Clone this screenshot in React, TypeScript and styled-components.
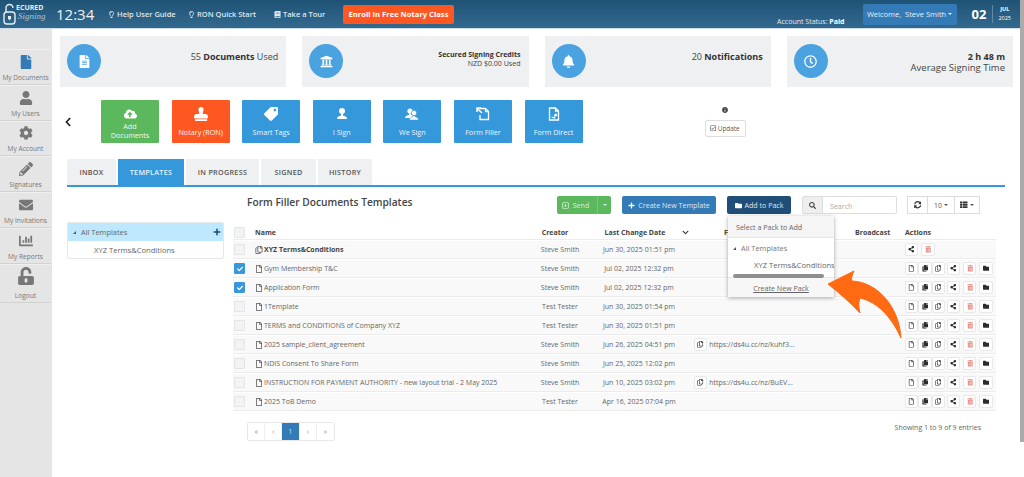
import React from 'react';
import styled, {createGlobalStyle} from 'styled-components';
import {
    FaBell, FaBook, FaChartBar, FaCheck, FaChevronDown, FaChevronLeft, FaCog, FaEnvelope,
    FaFile, FaFolder, FaInfoCircle, FaUnlockAlt, FaPencilAlt, FaPlus, FaRegCheckSquare, FaRegClock, FaRegCopy,
    FaRegFile, FaRegLightbulb, FaSearch, FaShareAlt, FaSyncAlt, FaTag, FaThList, FaTrashAlt,
    FaUniversity, FaUser, FaCloudUploadAlt, FaStamp, FaFileAlt, FaCopy, FaRegCaretSquareRight
} from 'react-icons/fa';

const GlobalStyle = createGlobalStyle`
  html, body {
    margin: 0;
    padding: 0;
    height: 477px;
    overflow: hidden;
    background: #fff;
    font-family: "Open Sans", "Liberation Sans", sans-serif;
    color: #555;
  }
  * { box-sizing: border-box; }
`

const Page = styled.div`
  position: relative;
  display: flex;
  width: 1024px;
  height: 477px;
  overflow: hidden;
`

const Viewport = styled.div`
  width: 1020px;
  flex: none;
`

const ScrollTrack = styled.div`
  width: 4px;
  height: 442px;
  background: #ababab;
  flex: none;
`

const Header = styled.header`
  height: 29px;
  display: flex;
  align-items: center;
  background: linear-gradient(#1e5375, #34698f);
  border-bottom: 1px solid #cfe0ec;
  color: #fff;
  padding-left: 3px;
`

const Logo = styled.div`
  width: 44px;
  height: 22px;
  flex: none;
  display: flex;
`

const LogoWords = styled.div`
  display: flex;
  flex-direction: column;
  padding-top: 1px;
`

const LogoTop = styled.div`
  font-size: 7px;
  line-height: 8px;
  font-weight: 700;
  color: #e6eef4;
`

const LogoScript = styled.div`
  font-family: "Liberation Serif", serif;
  font-style: italic;
  font-size: 9px;
  line-height: 9px;
  color: #a9c5d8;
  padding-left: 2px;
`

const Clock = styled.div`
  font-size: 15px;
  width: 52px;
  margin-left: 9px;
  color: #eef3f7;
`

const HeaderLink = styled.a<{ $width: number }>`
  display: flex;
  align-items: center;
  gap: 2px;
  width: ${({$width}) => $width}px;
  font-size: 7.5px;
  font-weight: 600;
  color: #dfe8ee;
  white-space: nowrap;
  svg { font-size: 7px; }
`

const Enroll = styled.div`
  background: #ff5722;
  border-radius: 2px;
  width: 111px;
  height: 19px;
  display: flex;
  align-items: center;
  justify-content: center;
  font-size: 7.6px;
  font-weight: 700;
`

const Status = styled.div`
  margin-left: auto;
  align-self: flex-end;
  font-size: 7px;
  padding-bottom: 2px;
  color: #e2eaf0;
  b { font-weight: 700; color: #fff; }
`

const Welcome = styled.div`
  margin-left: 18px;
  width: 94px;
  height: 21px;
  background: #337ab7;
  border-radius: 2px;
  font-size: 7.5px;
  display: flex;
  align-items: center;
  justify-content: center;
  color: #e8f0f6;
`

const DateBox = styled.div`
  display: flex;
  align-items: center;
  margin-left: 15px;
  margin-right: 9px;
`

const Day = styled.div`
  font-size: 13px;
  font-weight: 700;
  padding-right: 6px;
  border-right: 1px solid #5f8aa8;
  line-height: 18px;
`

const Month = styled.div`
  font-size: 5.5px;
  line-height: 9px;
  padding-left: 5px;
  text-align: center;
`

const Body = styled.div`
  display: flex;
  height: 448px;
`

const Sidebar = styled.nav`
  width: 52px;
  flex: none;
  background: #e5e5e5;
  padding-top: 20px;
`

const NavItem = styled.div`
  height: 35.8px;
  border-bottom: 1px solid #d2d2d2;
  border-top: 1px solid #f0f0f0;
  display: flex;
  flex-direction: column;
  align-items: center;
  justify-content: flex-end;
  padding-bottom: 2px;
  font-size: 6.6px;
  color: #777;
  white-space: nowrap;
  width: 51px;
  svg { font-size: 14px; color: #777; margin-bottom: 4px; }
  &:first-child svg { color: #337ab7; }
  &:last-child { height: 39px; }
  &:last-child svg { font-size: 18px; margin-bottom: 6px; }
`

const Main = styled.main`
  flex: 1;
  min-width: 0;
  padding: 7px 0 0 8px;
`

const StatsRow = styled.div`
  display: flex;
  gap: 16px;
  width: 953px;
`

const StatCard = styled.div`
  flex: 1;
  height: 51px;
  background: #eff0f2;
  display: flex;
  padding: 8px 8px 0 7px;
  justify-content: space-between;
`

const StatCircle = styled.div`
  width: 34px;
  height: 34px;
  border-radius: 50%;
  background: #4aa3e0;
  color: #fff;
  display: flex;
  align-items: center;
  justify-content: center;
  font-size: 13px;
  flex: none;
`

const StatText = styled.div<{ $small?: boolean }>`
  text-align: right;
  font-size: ${({$small}) => $small ? 7.05 : 9}px;
  line-height: ${({$small}) => $small ? 8.5 : 11}px;
  color: #444;
  padding-top: ${({$small}) => $small ? 6 : 7}px;
  b { font-weight: 700; color: #333; }
`

const StatSub = styled.span`
  font-size: 9.5px;
`

const ActionRow = styled.div`
  display: flex;
  align-items: flex-start;
  margin-top: 13px;
  height: 43px;
`

const Back = styled.div`
  width: 41px;
  padding: 16px 0 0 3px;
  font-size: 10px;
  color: #222;
`

const TileGroup = styled.div`
  display: flex;
  gap: 12.6px;
`

const Tile = styled.div<{ $color: string; $tight?: boolean }>`
  width: 58px;
  height: 43px;
  background: ${({$color}) => $color};
  color: #f0f6fb;
  font-size: 7.2px;
  line-height: 8.5px;
  text-align: center;
  white-space: pre-line;
  display: flex;
  flex-direction: column;
  align-items: center;
  padding-top: 7px;
  border-radius: 1px;
  svg {
    font-size: ${({$tight}) => $tight ? 13 : 14}px;
    height: 14px;
    margin-bottom: ${({$tight}) => $tight ? 1 : 7}px;
    color: #fff;
    flex: none;
  }
`

const MirroredTag = styled(FaTag)`
  transform: scaleX(-1);
`

const UpdateBox = styled.div`
  margin-left: 122px;
  display: flex;
  flex-direction: column;
  align-items: center;
  gap: 7px;
  padding-top: 7px;
  width: 41px;
  svg.info { font-size: 6px; color: #444; }
`

const UpdateButton = styled.div`
  width: 41px;
  height: 17px;
  border: 1px solid #ddd;
  border-radius: 2px;
  font-size: 6.4px;
  color: #555;
  display: flex;
  align-items: center;
  justify-content: center;
  gap: 1px;
`

const Tabs = styled.div`
  display: flex;
  margin-top: 16px;
  margin-left: 7px;
  width: 938px;
  height: 28px;
  gap: 2px;
  border-bottom: 2px solid #3498db;
`

const Tab = styled.div<{ $active?: boolean; $width: number }>`
  width: ${({$width}) => $width}px;
  height: 26px;
  background: ${({$active}) => $active ? '#3498db' : '#eff0f2'};
  color: ${({$active}) => $active ? '#e9f4fb' : '#555'};
  font-size: 7.2px;
  font-weight: 600;
  letter-spacing: .3px;
  display: flex;
  align-items: center;
  justify-content: center;
`

const Content = styled.div`
  display: flex;
  margin-left: 7px;
`

const TreePanel = styled.div`
  width: 157px;
  margin-top: 35px;
  height: 37px;
  border: 1px solid #e8e8e8;
  border-radius: 2px;
  font-size: 7.4px;
  color: #666;
  flex: none;
`

const TreeRoot = styled.div`
  height: 18px;
  background: #bde8fd;
  display: flex;
  align-items: center;
  padding: 0 2px 0 5px;
  gap: 5px;
  svg { margin-left: auto; font-size: 8px; color: #1d4e6e; }
`

const TreeCaret = styled.span`
  width: 0;
  height: 0;
  border-left: 3px solid transparent;
  border-bottom: 3px solid #555;
`

const TreeChild = styled.div`
  padding: 4px 0 0 26px;
  font-size: 7.6px;
`

const TablePane = styled.div`
  width: 763px;
  margin-left: 9px;
  flex: none;
`

const TopBar = styled.div`
  height: 35px;
  display: flex;
  align-items: flex-start;
  padding-top: 9px;
`

const Heading = styled.h2`
  margin: 0 0 0 14px;
  font-size: 10.2px;
  font-weight: 600;
  color: #444;
  width: 310px;
  line-height: 12px;
`

const Toolbar = styled.div`
  display: flex;
  height: 18px;
`

const ToolButton = styled.div<{ $color: string; $width: number; $gap?: number }>`
  width: ${({$width}) => $width}px;
  margin-right: ${({$gap}) => $gap || 0}px;
  height: 18px;
  border-radius: 2px;
  background: ${({$color}) => $color};
  color: #dbe9f3;
  font-size: 7.1px;
  display: flex;
  align-items: center;
  justify-content: center;
  gap: 3px;
  svg { font-size: 7px; color: #fff; }
`

const SendLabel = styled.div`
  flex: 1;
  display: flex;
  align-items: center;
  justify-content: center;
  gap: 4px;
`

const SendCaret = styled.div`
  width: 14px;
  height: 18px;
  border-left: 1px solid #7cc77c;
  display: flex;
  align-items: center;
  justify-content: center;
`

const SearchAddon = styled.div`
  width: 21px;
  height: 18px;
  background: #eee;
  border: 1px solid #ddd;
  border-radius: 2px 0 0 2px;
  display: flex;
  align-items: center;
  justify-content: center;
  font-size: 7px;
  color: #444;
`

const SearchInput = styled.div`
  width: 74px;
  height: 18px;
  border: 1px solid #ddd;
  border-left: 0;
  border-radius: 0 2px 2px 0;
  font-size: 7.1px;
  color: #aaa;
  padding: 4px 0 0 7px;
  margin-right: 11px;
`

const GhostButton = styled.div<{ $width: number }>`
  width: ${({$width}) => $width}px;
  height: 18px;
  border: 1px solid #ddd;
  margin-left: -1px;
  color: #555;
  font-size: 6.8px;
  display: flex;
  align-items: center;
  justify-content: center;
  gap: 2px;
  svg { font-size: 7.5px; color: #333; }
`

const Caret = styled.span`
  display: inline-block;
  width: 0;
  height: 0;
  border: 2px solid transparent;
  border-top-color: currentColor;
  border-bottom: 0;
`

const Table = styled.div`
  font-size: 7px;
  color: #666;
`

const Row = styled.div<{ $head?: boolean }>`
  display: grid;
  grid-template-columns: 22px 269px 72px 86px 12px 161px 50px 1fr;
  height: ${({$head}) => $head ? 18 : 19}px;
  padding-top: ${({$head}) => $head ? 3 : 0}px;
  align-items: center;
  background: ${({$head}) => $head ? '#fff' : '#f9f9f9'};
  border-bottom: 1px solid #ececec;
  border-top: ${({$head}) => $head ? 0 : '1px solid #fff'};
  font-weight: ${({$head}) => $head ? 700 : 400};
  color: ${({$head}) => $head ? '#444' : '#666'};
  white-space: nowrap;
`

const Check = styled.div<{ $on?: boolean }>`
  width: 11px;
  height: 11px;
  margin-left: 1px;
  border-radius: 1px;
  background: ${({$on}) => $on ? '#3b97dc' : '#f1f3f5'};
  border: 1px solid ${({$on}) => $on ? '#3b97dc' : '#e2e5e8'};
  color: #fff;
  font-size: 6px;
  display: flex;
  align-items: center;
  justify-content: center;
`

const NameCell = styled.div<{ $bold?: boolean }>`
  display: flex;
  align-items: center;
  gap: 1px;
  font-weight: ${({$bold}) => $bold ? 700 : 400};
  color: ${({$bold}) => $bold ? '#444' : '#666'};
  svg { font-size: 8px; color: #555; flex: none; }
`

const Center = styled.div`
  text-align: center;
`

const HeadCreator = styled(Center)`
  padding-right: 10px;
`

const HeadDate = styled(Center)`
  padding-right: 8px;
`

const SortCell = styled.div`
  font-size: 7px;
  line-height: 0;
  color: #333;
`

const HeadLink = styled.div`
  padding-left: 30px;
`

const LinkCell = styled.div`
  display: flex;
  align-items: center;
  gap: 2px;
`

const IconButton = styled.div<{ $danger?: boolean; $gap?: number }>`
  width: 13.3px;
  height: 13px;
  border: 1px solid #e8e8e8;
  border-radius: 2px;
  background: #fff;
  margin-left: ${({$gap}) => $gap || 0}px;
  display: flex;
  align-items: center;
  justify-content: center;
  font-size: 6.5px;
  color: ${({$danger}) => $danger ? '#e58a80' : '#2c2c2c'};
  flex: none;
`

const ActionCell = styled.div`
  display: flex;
  align-items: center;
`

const Footer = styled.div`
  display: flex;
  justify-content: space-between;
  padding: 11px 15px 0 14px;
`

const Pager = styled.div`
  display: flex;
  height: 19px;
  border: 1px solid #e8e8e8;
  border-radius: 2px;
`

const PageCell = styled.div<{ $active?: boolean }>`
  width: 17.2px;
  display: flex;
  align-items: center;
  justify-content: center;
  font-size: 6.5px;
  color: ${({$active}) => $active ? '#cfe2f0' : '#888'};
  background: ${({$active}) => $active ? '#337ab7' : '#fff'};
  border-right: 1px solid #eee;
  &:last-child { border-right: 0; }
`

const Showing = styled.div`
  font-size: 7px;
  color: #666;
  padding-top: 1px;
`

const Dropdown = styled.div`
  position: absolute;
  left: 728px;
  top: 216px;
  width: 106px;
  height: 81px;
  background: #fff;
  box-shadow: 0 1px 4px rgba(0,0,0,.35);
  font-size: 7.1px;
  color: #666;
  overflow: hidden;
`

const DropHead = styled.div`
  height: 22px;
  background: #f5f5f5;
  border-bottom: 1px solid #e6e6e6;
  padding: 6px 0 0 8px;
`

const DropRoot = styled.div`
  display: flex;
  align-items: center;
  gap: 5px;
  padding: 5px 0 0 5px;
  color: #777;
  font-size: 7.4px;
`

const DropChild = styled.div`
  padding: 7px 0 0 26px;
  white-space: nowrap;
  font-size: 7.6px;
`

const DropFoot = styled.div`
  position: relative;
  margin-top: 7px;
  height: 22px;
  padding-top: 5px;
  text-align: center;
  background: #f7f7f7;
  border-top: 1px solid #e6e6e6;
  text-decoration: underline;
`

const DropScroll = styled.div`
  position: absolute;
  top: -4px;
  left: 5px;
  height: 4px;
  width: 91px;
  background: #8f8f8f;
  border-radius: 2px;
`

const ArrowOverlay = styled.svg`
  position: absolute;
  left: 815px;
  top: 260px;
  pointer-events: none;
`

const LockMark = () => (
    <svg width="13" height="22" viewBox="0 0 13 22">
        <rect x="1" y="9" width="11" height="12" rx="3" fill="none" stroke="#e6eef4" strokeWidth="1.4"/>
        <path d="M3 9V5a3.5 3.5 0 0 1 7 0" fill="none" stroke="#e6eef4" strokeWidth="1.4"/>
        <path d="M5 13h3v2.5l-1.5 2-1.5-2z" fill="#e6eef4"/>
    </svg>
)

const BustIcon = () => (
    <svg width="14" height="14" viewBox="0 0 14 14" fill="currentColor">
        <circle cx="7" cy="4" r="3"/>
        <path d="M6 7h2v1.5c2 .6 4 1 4 3.5H2c0-2.5 2-2.9 4-3.5z"/>
    </svg>
)

const PairIcon = () => (
    <svg width="14" height="14" viewBox="0 0 14 14" fill="currentColor">
        <circle cx="5" cy="4" r="2.6"/>
        <path d="M4 6.5h2v1.2c1 .3 2 .6 2.4 1.3L6 11H0c0-2.3 2.3-2.7 4-3.3z"/>
        <circle cx="9" cy="6" r="2.7" stroke="#3498db" strokeWidth=".7"/>
        <path d="M8 8.5h2v1.2c1.6.5 3.5.8 3.5 3.3h-9c0-2.5 1.9-2.8 3.5-3.3z" stroke="#3498db" strokeWidth=".5"/>
    </svg>
)

const FillerIcon = () => (
    <svg width="14" height="14" viewBox="0 0 14 14" fill="none" stroke="currentColor" strokeWidth="1.3">
        <path d="M4 1.5h5.5l3 3v8H4V8"/>
        <path d="M9.5 1.5v3h3"/>
        <path d="M1 1l5 5M1 5V1h4" strokeWidth="1.5"/>
    </svg>
)

const DirectIcon = () => (
    <svg width="14" height="14" viewBox="0 0 14 14" fill="none" stroke="currentColor" strokeWidth="1.3">
        <path d="M2.5 1h6l3 3v9h-9z"/>
        <path d="M8.5 1v3h3"/>
        <path d="M4.5 10l3 1 1.5-4M7 8.5l2-1.5 1 2" strokeWidth="1.1"/>
    </svg>
)

const navItems = [
    {label: 'My Documents', icon: <FaFile/>},
    {label: 'My Users', icon: <FaUser/>},
    {label: 'My Account', icon: <FaCog/>},
    {label: 'Signatures', icon: <FaPencilAlt/>},
    {label: 'My Invitations', icon: <FaEnvelope/>},
    {label: 'My Reports', icon: <FaChartBar/>},
    {label: 'Logout', icon: <FaUnlockAlt/>},
]

const tiles = [
    {label: 'Add\nDocuments', color: '#5cb85c', icon: <FaCloudUploadAlt/>, tight: true},
    {label: 'Notary (RON)', color: '#ff5722', icon: <FaStamp/>},
    {label: 'Smart Tags', color: '#3498db', icon: <MirroredTag/>},
    {label: 'I Sign', color: '#3498db', icon: <BustIcon/>},
    {label: 'We Sign', color: '#3498db', icon: <PairIcon/>},
    {label: 'Form Filler', color: '#3498db', icon: <FillerIcon/>},
    {label: 'Form Direct', color: '#3498db', icon: <DirectIcon/>},
]

const tabs = [
    {label: 'INBOX', width: 49},
    {label: 'TEMPLATES', width: 66, active: true},
    {label: 'IN PROGRESS', width: 73},
    {label: 'SIGNED', width: 55},
    {label: 'HISTORY', width: 54},
]

interface TemplateRow {
    name: string
    creator: string
    date: string
    link?: string
    checked?: boolean
    pack?: boolean
}

const rows: TemplateRow[] = [
    {name: 'XYZ Terms&Conditions', creator: 'Steve Smith', date: 'Jun 30, 2025 01:51 pm', pack: true},
    {name: 'Gym Membership T&C', creator: 'Steve Smith', date: 'Jul 02, 2025 12:32 pm', checked: true},
    {name: 'Application Form', creator: 'Steve Smith', date: 'Jul 02, 2025 12:32 pm', checked: true},
    {name: '1Template', creator: 'Test Tester', date: 'Jun 30, 2025 01:54 pm'},
    {name: 'TERMS and CONDITIONS of Company XYZ', creator: 'Test Tester', date: 'Jun 30, 2025 01:51 pm'},
    {name: '2025 sample_client_agreement', creator: 'Steve Smith', date: 'Jun 26, 2025 04:51 pm', link: 'https://ds4u.cc/nz/kuhf3...'},
    {name: 'NDIS Consent To Share Form', creator: 'Steve Smith', date: 'Jun 25, 2025 12:02 pm'},
    {name: 'INSTRUCTION FOR PAYMENT AUTHORITY - new layout trial - 2 May 2025', creator: 'Steve Smith', date: 'Jun 10, 2025 03:02 pm', link: 'https://ds4u.cc/nz/BuEV...'},
    {name: '2025 ToB Demo', creator: 'Test Tester', date: 'Apr 16, 2025 07:04 pm'},
]

const App = () => {
    return (
        <Page>
            <GlobalStyle/>
            <Viewport>
                <Header>
                    <Logo>
                        <LockMark/>
                        <LogoWords>
                            <LogoTop>ECURED</LogoTop>
                            <LogoScript>Signing</LogoScript>
                        </LogoWords>
                    </Logo>
                    <Clock>12:34</Clock>
                    <HeaderLink $width={80}><FaRegLightbulb/>Help User Guide</HeaderLink>
                    <HeaderLink $width={86}><FaRegLightbulb/>RON Quick Start</HeaderLink>
                    <HeaderLink $width={69}><FaBook/>Take a Tour</HeaderLink>
                    <Enroll>Enroll In Free Notary Class</Enroll>
                    <Status>Account Status: <b>Paid</b></Status>
                    <Welcome>Welcome,&nbsp; Steve Smith&nbsp;<Caret/></Welcome>
                    <DateBox>
                        <Day>02</Day>
                        <Month><b>JUL</b><br/>2025</Month>
                    </DateBox>
                </Header>
                <Body>
                    <Sidebar>
                        {navItems.map(item => (
                            <NavItem key={item.label}>{item.icon}{item.label}</NavItem>
                        ))}
                    </Sidebar>
                    <Main>
                        <StatsRow>
                            <StatCard>
                                <StatCircle><FaFileAlt/></StatCircle>
                                <StatText>55 <b>Documents</b> Used</StatText>
                            </StatCard>
                            <StatCard>
                                <StatCircle><FaUniversity/></StatCircle>
                                <StatText $small><b>Secured Signing Credits</b><br/>NZD $0.00 Used</StatText>
                            </StatCard>
                            <StatCard>
                                <StatCircle><FaBell/></StatCircle>
                                <StatText>20 <b>Notifications</b></StatText>
                            </StatCard>
                            <StatCard>
                                <StatCircle><FaRegClock/></StatCircle>
                                <StatText><b>2 h 48 m</b><br/><StatSub>Average Signing Time</StatSub></StatText>
                            </StatCard>
                        </StatsRow>
                        <ActionRow>
                            <Back><FaChevronLeft/></Back>
                            <TileGroup>
                                {tiles.map(tile => (
                                    <Tile key={tile.label} $color={tile.color} $tight={tile.tight}>{tile.icon}{tile.label}</Tile>
                                ))}
                            </TileGroup>
                            <UpdateBox>
                                <FaInfoCircle className="info"/>
                                <UpdateButton><FaRegCheckSquare/>Update</UpdateButton>
                            </UpdateBox>
                        </ActionRow>
                        <Tabs>
                            {tabs.map(tab => (
                                <Tab key={tab.label} $active={tab.active} $width={tab.width}>{tab.label}</Tab>
                            ))}
                        </Tabs>
                        <Content>
                            <TreePanel>
                                <TreeRoot><TreeCaret/>All Templates<FaPlus/></TreeRoot>
                                <TreeChild>XYZ Terms&amp;Conditions</TreeChild>
                            </TreePanel>
                            <TablePane>
                                <TopBar>
                                    <Heading>Form Filler Documents Templates</Heading>
                                    <Toolbar>
                                        <ToolButton $color="#5cb85c" $width={54} $gap={11}>
                                            <SendLabel><FaRegCaretSquareRight/>Send</SendLabel>
                                            <SendCaret><Caret/></SendCaret>
                                        </ToolButton>
                                        <ToolButton $color="#337ab7" $width={94} $gap={11}><FaPlus/>Create New Template</ToolButton>
                                        <ToolButton $color="#1f4e79" $width={64} $gap={11}><FaFolder/>Add to Pack</ToolButton>
                                        <SearchAddon><FaSearch/></SearchAddon>
                                        <SearchInput>Search</SearchInput>
                                        <GhostButton $width={21}><FaSyncAlt/></GhostButton>
                                        <GhostButton $width={28}>10 <Caret/></GhostButton>
                                        <GhostButton $width={26}><FaThList/><Caret/></GhostButton>
                                    </Toolbar>
                                </TopBar>
                                <Table>
                                    <Row $head>
                                        <Check/>
                                        <div>Name</div>
                                        <HeadCreator>Creator</HeadCreator>
                                        <HeadDate>Last Change Date</HeadDate>
                                        <SortCell><FaChevronDown/></SortCell>
                                        <HeadLink>Form Link</HeadLink>
                                        <div>Broadcast</div>
                                        <div>Actions</div>
                                    </Row>
                                    {rows.map(row => (
                                        <Row key={row.name}>
                                            <Check $on={row.checked}>{row.checked && <FaCheck/>}</Check>
                                            <NameCell $bold={row.pack}>{row.pack ? <FaRegCopy/> : <FaRegFile/>}{row.name}</NameCell>
                                            <Center>{row.creator}</Center>
                                            <Center>{row.date}</Center>
                                            <div/>
                                            {row.link ? <LinkCell><IconButton><FaRegCopy/></IconButton>{row.link}</LinkCell> : <div/>}
                                            <div/>
                                            {row.pack ? (
                                                <ActionCell>
                                                    <IconButton><FaShareAlt/></IconButton>
                                                    <IconButton $danger $gap={3}><FaTrashAlt/></IconButton>
                                                </ActionCell>
                                            ) : (
                                                <ActionCell>
                                                    <IconButton><FaRegFile/></IconButton>
                                                    <IconButton><FaCopy/></IconButton>
                                                    <IconButton><FaRegCopy/></IconButton>
                                                    <IconButton $gap={2}><FaShareAlt/></IconButton>
                                                    <IconButton $danger $gap={3}><FaTrashAlt/></IconButton>
                                                    <IconButton $gap={3}><FaFolder/></IconButton>
                                                </ActionCell>
                                            )}
                                        </Row>
                                    ))}
                                </Table>
                                <Footer>
                                    <Pager>
                                        <PageCell>«</PageCell>
                                        <PageCell>‹</PageCell>
                                        <PageCell $active>1</PageCell>
                                        <PageCell>›</PageCell>
                                        <PageCell>»</PageCell>
                                    </Pager>
                                    <Showing>Showing 1 to 9 of 9 entries</Showing>
                                </Footer>
                            </TablePane>
                        </Content>
                    </Main>
                </Body>
            </Viewport>
            <ScrollTrack/>
            <Dropdown>
                <DropHead>Select a Pack to Add</DropHead>
                <DropRoot><TreeCaret/>All Templates</DropRoot>
                <DropChild>XYZ Terms&amp;Conditions</DropChild>
                <DropFoot>
                    <DropScroll/>
                    Create New Pack
                </DropFoot>
            </Dropdown>
            <ArrowOverlay width="100" height="85" viewBox="0 0 100 85">
                <path d="M13 24 L39 11 C37 15 36 18 37 21 C62 22 84 46 86 78 C76 56 62 42 45 38 C43 43 44 48 45 53 C35 42 24 33 13 24 Z" fill="#ff6a13" stroke="#ff6a13" strokeWidth="1" strokeLinejoin="round"/>
            </ArrowOverlay>
        </Page>
    );
};

export default App;
